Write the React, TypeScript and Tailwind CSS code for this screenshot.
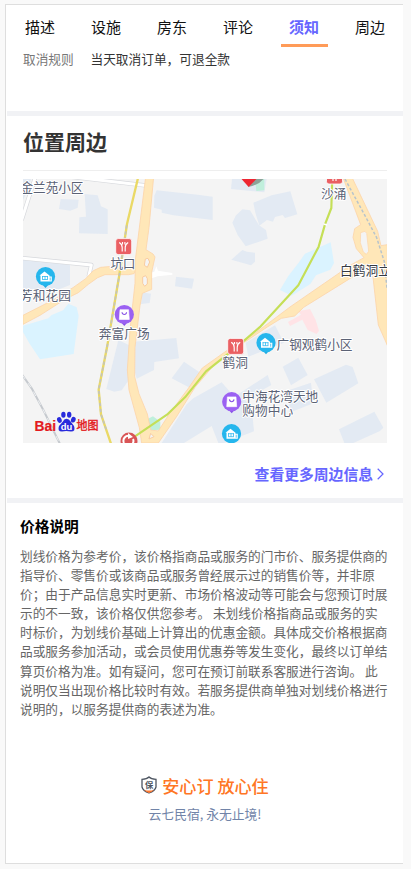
const tabs = ['描述', '设施', '房东', '评论', '须知', '周边'];

const priceLines = [
  '划线价格为参考价，该价格指商品或服务的门市价、服务提供商的',
  '指导价、零售价或该商品或服务曾经展示过的销售价等，并非原',
  '价；由于产品信息实时更新、市场价格波动等可能会与您预订时展',
  '示的不一致，该价格仅供您参考。 未划线价格指商品或服务的实',
  '时标价，为划线价基础上计算出的优惠金额。具体成交价格根据商',
  '品或服务参加活动，或会员使用优惠券等发生变化，最终以订单结',
  '算页价格为准。如有疑问，您可在预订前联系客服进行咨询。 此',
  '说明仅当出现价格比较时有效。若服务提供商单独对划线价格进行',
  '说明的，以服务提供商的表述为准。',
];

const buildings = [
  '137,87 191,89 188,113 166,122 132,117',
  '209,72 248,76 258,109 278,118 278,192 192,190 193,142 213,140',
  '24,264 165,285 165,345 110,367 24,367',
  '24,27 48,27 38,62 24,90',
  '425,61 548,74 593,80 593,150 475,136 440,128 440,119 417,113 418,77',
  '651,27 755,27 748,67 648,57',
  '715,98 770,76 826,64 847,133 810,144 803,135 780,141 774,155 756,150 733,167 721,128',
  '662,137 682,118 705,121 732,166 753,180 758,206 692,229 668,195 652,158',
  '649,269 682,240 696,245 720,248 720,275 708,286',
  '483,320 537,326 531,356 480,349',
  '382,367 408,371 404,399 378,402',
  '310,510 343,526 343,628 320,661 298,665 274,657',
  '355,515 484,504 492,565 418,576 417,600 365,626 350,570',
  '507,575 557,609 537,660 470,625',
  '440,819 515,703 535,685 620,637 658,680 758,615 769,645 690,690 710,710 717,784 627,819 610,819 590,768 507,819',
  '692,518 780,466 807,518 700,560',
  '803,590 850,563 878,615 828,646',
  '897,628 993,584 1013,591 1030,640 934,698',
  '823,660 888,638 895,700 823,728',
  '972,778 1078,725 1105,773 1095,783 1015,819 988,819',
];

const roads = [
  'M24 436L116 389L174 353L212 326L235 302L257 292L315 287L355 293L363 300L357 311L340 314L270 314L248 323L220 343L190 368L150 388L75 436L24 463Z',
  'M392 20H416L402 173L393 239L414 252L420 261L410 307L410 358L382 370L375 407L360 532L359 620L372 671L397 732L407 780L430 783L464 730L520 655L562 594L638 540L720 490L825 411L1009 284L1047 263L1024 236L1014 202L1019 176L1037 164L983 20H1010L1088 184L1098 227L1117 224V526L1090 465L1070 285L1035 307L990 335L866 412L839 438L799 445L757 471L676 525L597 585L540 652L486 738L430 819H380L373 773L342 660L337 600L345 480L360 340L361 270Z',
];

function Metro({ x, y }: { x: number; y: number }) {
  return (
    <g transform={`translate(${x} ${y})`}>
      <rect x="-8" y="-8" width="16" height="16" rx="2.5" fill="#ea6063" stroke="#fff" strokeWidth=".8" />
      <path d="M-4.5-4.2Q-1.5-2.6-1.5 1V5M4.5-4.2Q1.5-2.6 1.5 1V5M-1.2-4.5V-2.2M1.2-4.5V-2.2" fill="none" stroke="#fff" strokeWidth="1.15" />
    </g>
  );
}

function Residence({ x, y }: { x: number; y: number }) {
  return (
    <g transform={`translate(${x} ${y})`}>
      <path d="M-4 7L0 11.5L4 7Z" fill="#21aae0" />
      <circle r="9.6" fill="#25b6ed" />
      <path d="M-6-1L-1-5L4-1V0H6.3V5H-5V-1Z" fill="#fff" />
      <path d="M-3.3 0H2.3M-3.3 3H2.3M-3-.5V3M-.5-.5V3M2-.5V3M4.7 1V4" fill="none" stroke="#25b6ed" strokeWidth=".75" />
    </g>
  );
}

function Shop({ x, y }: { x: number; y: number }) {
  return (
    <g transform={`translate(${x} ${y})`}>
      <path d="M-4 7L0 11.5L4 7Z" fill="#8751e5" />
      <circle r="9.6" fill="#9b61f2" />
      <path d="M-4.3-4.8H4.3L5 5H-5Z" fill="#fff" stroke="#fff" strokeWidth=".6" strokeLinejoin="round" />
      <path d="M-2.3-2.3Q-2 0 0 0Q2 0 2.3-2.3" fill="none" stroke="#8751e5" strokeWidth="1.1" />
    </g>
  );
}

function Label({ x, y, children, w, dark }: { x: number; y: number; children: string; w: number; dark?: boolean }) {
  return (
    <text x={x} y={y} textLength={w} fontSize="12.7" fill={dark ? '#343943' : '#5b6275'} stroke="#fff" strokeWidth="2" strokeLinejoin="round" paintOrder="stroke">
      {children}
    </text>
  );
}

function AreaMap() {
  return (
    <svg className="block h-[264px] w-[364px]" viewBox="23 179 364 264">
      <rect x="23" y="179" width="364" height="264" fill="#f4f4f4" />
      <g transform="translate(15 170) scale(.33333)">
        <g fill="#e3eaf3">
          {buildings.map((points) => <polygon key={points} points={points} />)}
        </g>
        <g fill="#daf3ff">
          <path d="M24 467L100 445L110 435L144 421L160 401L185 412L191 438L176 552L75 568L43 520L24 486Z" />
          <path d="M947 217L957 279L946 299L903 316L886 342L830 377L795 360L820 318L851 278L870 251Z" />
        </g>
        <path d="M720 27H748V61L724 63ZM396 748L414 739L436 755V779L407 781Z" fill="#c0efdc" />
        <path d="M819 456L858 434L850 424L885 417L902 450L912 482L905 492L878 480L862 449L825 468Z" fill="#ffe3e6" />
        <g fill="none" strokeLinejoin="round">
          <path d="M60 24L20 150M165 20L398 47M20 264L229 285L221 320" stroke="#d6d8dc" strokeWidth="13" />
          <path d="M60 24L20 150M165 20L398 47M20 264L229 285L221 320" stroke="#fff" strokeWidth="9" />
          <path d="M407 309L418 305L424 289L429 302L472 309V314L428 319L410 325Z" fill="#fff" />
          <path d="M22 615L50 655L85 720L136 824" stroke="#c6cacf" strokeWidth="6" />
          <path d="M22 615L50 655L85 720L136 824" stroke="#eef0f2" strokeWidth="3" strokeDasharray="15 15" />
          {roads.map((d) => <path key={d} d={d} fill="#ffe7b8" stroke="#fdd5a9" strokeWidth="2.5" />)}
          <path d="M1037 188L1050 184L1055 190L1061 244L1054 253L1045 246L1036 218Z" fill="#f4f4f4" stroke="#fdd5a9" strokeWidth="2" />
          <path d="M391 267L399 265L404 276L397 292L388 286ZM383 321L392 317L397 326V342L389 349L383 340ZM407 790L417 800L402 807Z" fill="#f4f4f4" stroke="#f8cca1" strokeWidth="3" />
          <path d="M990 27L1050 137L1085 203L1108 275L1116 355" stroke="#b8c4cc" strokeWidth="4.5" strokeDasharray="9 6" />
          <path d="M370 20L336 162L313 315L276 532L251 659L258 733L289 824" stroke="#ead965" strokeWidth="7" />
          <path d="M335 166L313 315L276 532L251 659L258 733L274 780" stroke="#c5c5b8" strokeWidth="5" strokeDasharray="10 8" />
          <path d="M952 20L949 114L930 163L911 230L850 346L737 469L663 533L573 604L510 682L456 734L350 806" stroke="#c5df57" strokeWidth="6.5" />
          <path d="M926 162L936 165" stroke="#fff" strokeWidth="4" />
        </g>
        <path d="M699 51L724 24H748Q733 45 699 51Z" fill="#8da399" />
        <path d="M677 24H727L701 51Z" fill="#ed2733" />
      </g>
      <Metro x={334.5} y={176} />
      <Metro x={123.7} y={246.6} />
      <Metro x={235.7} y={346.4} />
      <Residence x={45.5} y={276.5} />
      <Residence x={266} y={342.7} />
      <Residence x={231.5} y={433.7} />
      <Shop x={124.3} y={314.5} />
      <Shop x={231.7} y={401.7} />
      <g>
        <circle cx="129" cy="441" r="8.5" fill="#d95556" />
        <path d="M124 443A5 5 0 0 1 130 436M133 439A5 5 0 0 1 129 446" fill="none" stroke="#fff" strokeWidth="2" />
        <path d="M128 433L133 437L128 439Z" fill="#fff" />
      </g>
      <Label x={20.5} y={191.7} w={63}>金兰苑小区</Label>
      <Label x={110.5} y={267.5} w={25}>坑口</Label>
      <Label x={20} y={300.2} w={51}>芳和花园</Label>
      <Label x={98.8} y={338.3} w={51}>奔富广场</Label>
      <Label x={321} y={197.5} w={25.5}>沙涌</Label>
      <Label x={340} y={275} w={51} dark>白鹤洞立</Label>
      <Label x={222.5} y={367.3} w={25.5}>鹤洞</Label>
      <Label x={276.5} y={348.5} w={76}>广钢观鹤小区</Label>
      <Label x={242.3} y={400.5} w={76}>中海花湾天地</Label>
      <Label x={242.3} y={415} w={51}>购物中心</Label>
      <g fontWeight="700">
        <text x="34.5" y="431" textLength="21.5" lengthAdjust="spacingAndGlyphs" fontSize="14.5" fill="#e31920" stroke="#e31920" strokeWidth=".2" fontFamily="Liberation Sans, sans-serif">Bai</text>
        <g fill="#292bdc">
          <ellipse cx="59.4" cy="420" rx="2.3" ry="2.9" transform="rotate(-20 59.4 420)" />
          <ellipse cx="63.4" cy="414.8" rx="2.2" ry="3" />
          <ellipse cx="69.2" cy="414.8" rx="2.2" ry="3" />
          <ellipse cx="73.3" cy="419.7" rx="2.3" ry="2.9" transform="rotate(20 73.3 419.7)" />
          <path d="M66.4 418.7Q69 418.7 71 422L74 426Q76 431.5 71 431.5Q66 430.5 62 431.5Q57 431.5 59 426L63 421.5Q64 418.7 66.4 418.7Z" />
        </g>
        <text x="60.7" y="429.8" textLength="11.5" lengthAdjust="spacingAndGlyphs" fontSize="9.5" fill="#fff" fontFamily="Liberation Sans, sans-serif">du</text>
        <text x="76.5" y="430.2" textLength="22" lengthAdjust="spacingAndGlyphs" fontSize="12" fontWeight="400" fill="#e31920" stroke="#e31920" strokeWidth=".4">地图</text>
      </g>
    </svg>
  );
}

export default function App() {
  return (
    <div className="h-[869px] w-[411px] overflow-hidden bg-[#f9f9f9] pt-[4px] pl-[5px] font-['Noto_Sans_CJK_SC',sans-serif]">
      <main className="h-[860px] w-[398px] border-t border-b border-l border-[#dedede] bg-white pl-px">
        <nav className="grid h-[43px] grid-cols-6">
          {tabs.map((tab, i) => (
            <div key={tab} className={`flex flex-col items-center pt-[11px] text-[15px] leading-[22px] ${i === 4 ? 'font-bold text-[#6666ff]' : 'text-[#111]'}`}>
              <span>{tab}</span>
              {i === 4 && <span className="mt-[6px] h-[3px] w-[47px] shrink-0 bg-[#ff9b58]" />}
            </div>
          ))}
        </nav>
        <section className="flex h-[63px] pt-px pl-[16px] text-[12.7px] leading-[20px]">
          <span className="w-[67.5px] text-[#777]">取消规则</span>
          <span className="text-[#333]">当天取消订单，可退全款</span>
        </section>
        <div className="h-[5px] bg-[#f1f2f5]" />
        <section className="h-[382px] px-[16px]">
          <h2 className="h-[55px] border-b border-[#eee] pt-[10px] text-[21px] leading-[30px] font-bold text-[#333]">位置周边</h2>
          <div className="pt-[8px]"><AreaMap /></div>
          <div className="mt-[20px] flex items-center justify-end text-[14.8px] leading-[22px] font-bold text-[#6666ff]">
            <span>查看更多周边信息</span>
            <svg className="mr-[3px] ml-[4px] h-[12px] w-[7px]" viewBox="0 0 7 12" fill="none" stroke="currentColor" strokeWidth="1.2"><path d="M.7.8L6 6L.7 11.2" /></svg>
          </div>
        </section>
        <div className="h-[5px] bg-[#f1f2f5]" />
        <section className="h-[265px] pt-[12px] pl-[13px]">
          <h3 className="text-[14.7px] leading-[22px] font-bold text-black">价格说明</h3>
          <div className="mt-[9px] text-[12.68px] leading-[19.1px] text-[#666]">
            {priceLines.map((line) => <p key={line} className="whitespace-nowrap">{line}</p>)}
          </div>
        </section>
        <footer className="flex flex-col items-center">
          <div className="flex h-[34px] items-center gap-[5px]">
            <svg className="h-[18px] w-[16px]" viewBox="0 0 16 18">
              <path d="M8 1Q10 3 15 3.4V11Q14 15 8 17Q2 15 1 11V3.4Q6 3 8 1Z" fill="#fff" stroke="#4d5561" strokeWidth="1.3" />
              <path d="M3 14Q8 15 13 14Q11 16 8 17Q5 16 3 14Z" fill="#ff772d" />
              <text x="4" y="12" fontSize="8.3" fontWeight="700" fill="#4d5561">保</text>
            </svg>
            <span className="text-[17.1px] font-medium whitespace-nowrap text-[#ff7625]"><span className="relative top-px">安心订 放心住</span></span>
          </div>
          <div className="mt-[2px] text-[12.8px] leading-[20px] text-[#7184a8]">云七民宿, 永无止境!</div>
        </footer>
      </main>
    </div>
  );
}
